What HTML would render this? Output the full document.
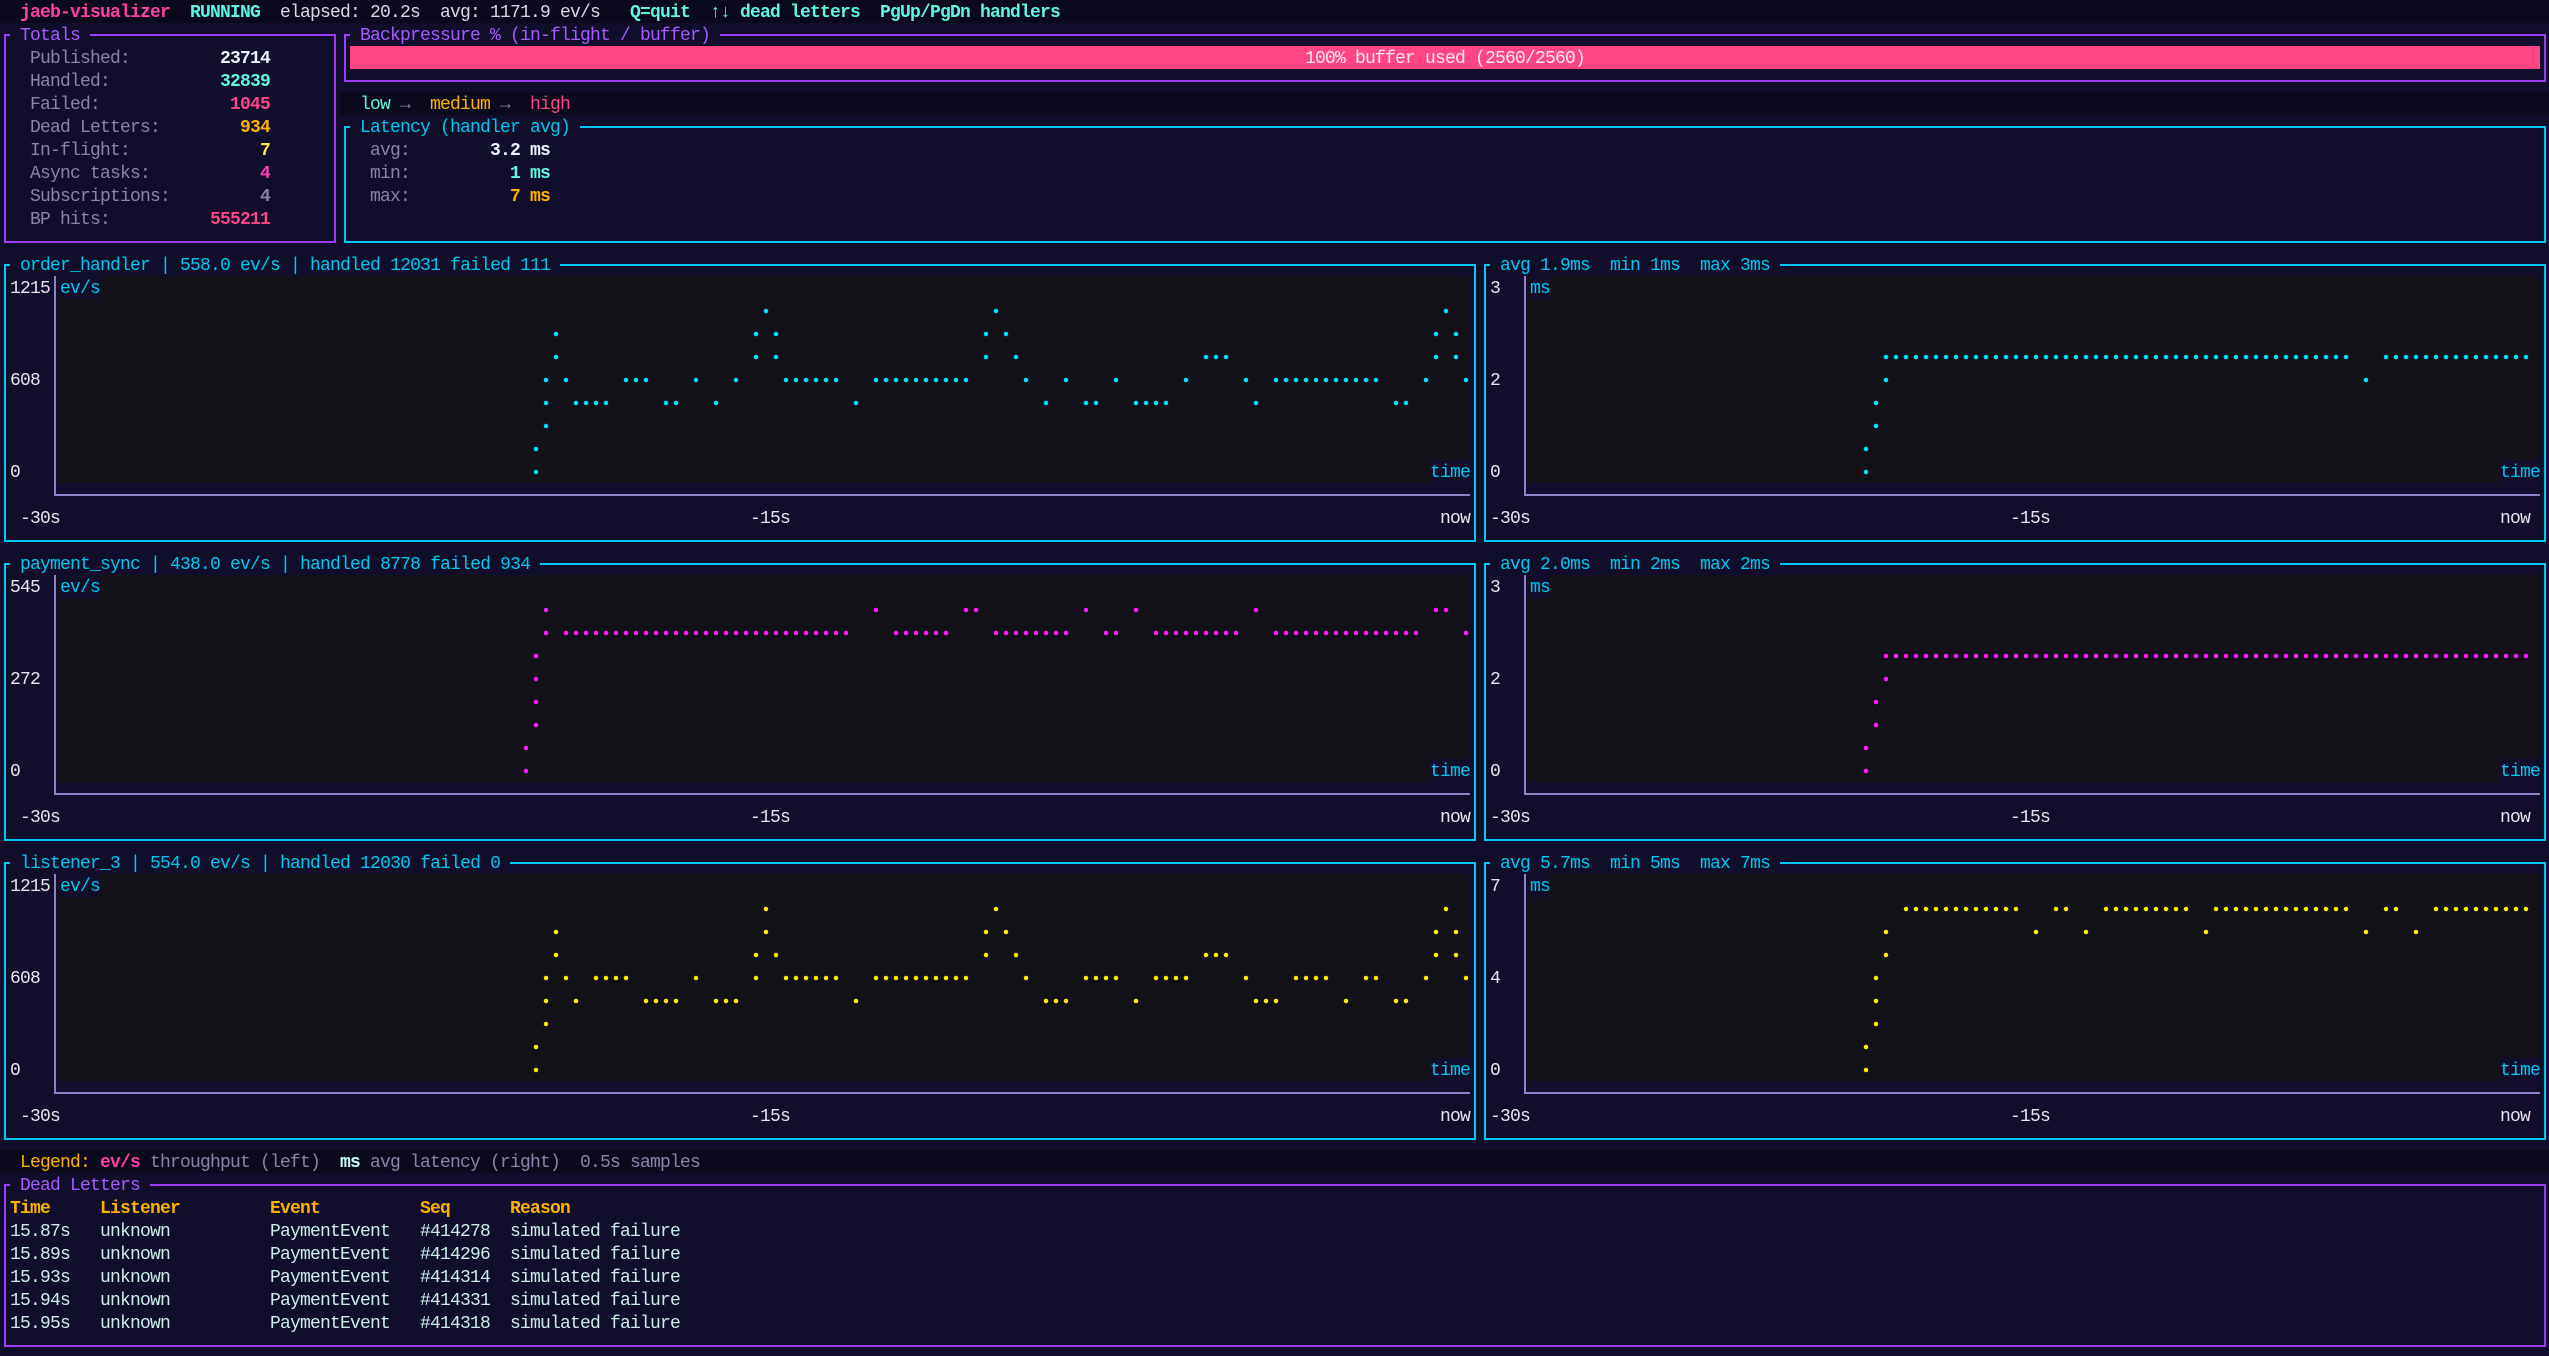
<!DOCTYPE html>
<html><head><meta charset="utf-8"><style>
body{margin:0;width:2549px;height:1356px;background:#110e2b;position:relative;overflow:hidden;font-family:"Liberation Mono","DejaVu Sans Mono",monospace;font-size:18px;letter-spacing:-0.8px;color:#e6e6ee}
.t{position:absolute;white-space:pre;line-height:23px;height:23px;padding-top:2px;box-sizing:border-box;overflow:visible}
.b{position:absolute;border:2px solid;box-sizing:border-box}
.k{font-weight:bold}
.ti{background:#110e2b;padding-left:10px;padding-right:10px}
.r{text-align:right;width:100px}
.lb{color:#8a84a8}
.cy{color:#00c8f0}
.pu{color:#a45cff}
.pl{position:absolute;background:#131219}
.ax{position:absolute;background:#8f82c8}
.dl{color:#cdeee8}
.or{color:#ffb000}
</style></head><body>
<div style="position:absolute;left:0;top:0;width:2549px;height:23px;background:#0b0a1c"></div>
<span class="t k" style="left:20px;top:0;color:#ff3fa4">jaeb-visualizer</span>
<span class="t k" style="left:190px;top:0;color:#5ff5e0">RUNNING</span>
<span class="t" style="left:280px;top:0;color:#d8d8e8">elapsed: 20.2s</span>
<span class="t" style="left:440px;top:0;color:#d8d8e8">avg: 1171.9 ev/s</span>
<span class="t k" style="left:630px;top:0;color:#5ff5e0">Q=quit</span>
<span class="t k" style="left:710px;top:0;color:#5ff5e0">↑↓ dead letters</span>
<span class="t k" style="left:880px;top:0;color:#5ff5e0">PgUp/PgDn handlers</span>

<!-- Totals -->
<div class="b" style="left:4px;top:33.5px;width:332px;height:209px;border-color:#9b3cff"></div>
<span class="t ti pu" style="left:10px;top:23px">Totals</span>
<span class="t lb" style="left:30px;top:46px">Published:</span><span class="t k r" style="left:170px;top:46px;color:#eef4ff">23714</span>
<span class="t lb" style="left:30px;top:69px">Handled:</span><span class="t k r" style="left:170px;top:69px;color:#5ff5e6">32839</span>
<span class="t lb" style="left:30px;top:92px">Failed:</span><span class="t k r" style="left:170px;top:92px;color:#ff4584">1045</span>
<span class="t lb" style="left:30px;top:115px">Dead Letters:</span><span class="t k r" style="left:170px;top:115px;color:#ffb000">934</span>
<span class="t lb" style="left:30px;top:138px">In-flight:</span><span class="t k r" style="left:170px;top:138px;color:#ffe45c">7</span>
<span class="t lb" style="left:30px;top:161px">Async tasks:</span><span class="t k r" style="left:170px;top:161px;color:#ff3fc0">4</span>
<span class="t lb" style="left:30px;top:184px">Subscriptions:</span><span class="t k r" style="left:170px;top:184px;color:#8a84a8">4</span>
<span class="t lb" style="left:30px;top:207px">BP hits:</span><span class="t k r" style="left:170px;top:207px;color:#ff4584">555211</span>

<!-- Backpressure -->
<div class="b" style="left:344px;top:33.5px;width:2202px;height:48px;border-color:#9b3cff"></div>
<span class="t ti pu" style="left:350px;top:23px">Backpressure % (in-flight / buffer)</span>
<div class="t" style="left:350px;top:46px;width:2190px;background:#ff4584;color:#fbeaf2;text-align:center">100% buffer used (2560/2560)</div>
<div style="position:absolute;left:340px;top:92px;width:2209px;height:23px;background:#0b0a1c"></div>
<span class="t" style="left:360px;top:92px;color:#5ff5e0">low</span>
<span class="t lb" style="left:400px;top:92px">→</span>
<span class="t or" style="left:430px;top:92px">medium</span>
<span class="t lb" style="left:500px;top:92px">→</span>
<span class="t" style="left:530px;top:92px;color:#ff4584">high</span>

<!-- Latency -->
<div class="b" style="left:344px;top:125.5px;width:2202px;height:117px;border-color:#00c8f0"></div>
<span class="t ti cy" style="left:350px;top:115px">Latency (handler avg)</span>
<span class="t lb" style="left:370px;top:138px">avg:</span><span class="t k r" style="left:450px;top:138px;color:#eef4ff">3.2 ms</span>
<span class="t lb" style="left:370px;top:161px">min:</span><span class="t k r" style="left:450px;top:161px;color:#5ff5e6">1 ms</span>
<span class="t lb" style="left:370px;top:184px">max:</span><span class="t k r" style="left:450px;top:184px;color:#ffb000">7 ms</span>

<!-- Chart 1 -->
<div class="b" style="left:4px;top:263.5px;width:1472px;height:278px;border-color:#00c8f0"></div>
<div class="b" style="left:1484px;top:263.5px;width:1062px;height:278px;border-color:#00c8f0"></div>
<div class="pl" style="left:57px;top:276px;width:1413px;height:207px"></div>
<div class="pl" style="left:1527px;top:276px;width:1013px;height:207px"></div>
<div class="ax" style="left:54px;top:276px;width:2px;height:219.5px"></div>
<div class="ax" style="left:54px;top:493.5px;width:1416px;height:2px"></div>
<div class="ax" style="left:1524px;top:276px;width:2px;height:219.5px"></div>
<div class="ax" style="left:1524px;top:493.5px;width:1016px;height:2px"></div>
<span class="t ti cy" style="left:10px;top:253px">order_handler | 558.0 ev/s | handled 12031 failed 111</span>
<span class="t ti cy" style="left:1490px;top:253px">avg 1.9ms  min 1ms  max 3ms</span>
<span class="t" style="left:10px;top:276px">1215</span><span class="t" style="left:10px;top:368px">608</span><span class="t" style="left:10px;top:460px">0</span>
<span class="t" style="left:1490px;top:276px">3</span><span class="t" style="left:1490px;top:368px">2</span><span class="t" style="left:1490px;top:460px">0</span>
<span class="t cy" style="left:60px;top:276px;background:#110e2b">ev/s</span><span class="t cy" style="left:1530px;top:276px;background:#110e2b">ms</span>
<span class="t cy" style="left:1430px;top:460px;background:#110e2b">time</span><span class="t cy" style="left:2500px;top:460px;background:#110e2b">time</span>
<span class="t" style="left:20px;top:506px">-30s</span><span class="t" style="left:750px;top:506px">-15s</span><span class="t" style="left:1440px;top:506px">now</span>
<span class="t" style="left:1490px;top:506px">-30s</span><span class="t" style="left:2010px;top:506px">-15s</span><span class="t" style="left:2500px;top:506px">now</span>

<!-- Chart 2 -->
<div class="b" style="left:4px;top:562.5px;width:1472px;height:278px;border-color:#00c8f0"></div>
<div class="b" style="left:1484px;top:562.5px;width:1062px;height:278px;border-color:#00c8f0"></div>
<div class="pl" style="left:57px;top:575px;width:1413px;height:207px"></div>
<div class="pl" style="left:1527px;top:575px;width:1013px;height:207px"></div>
<div class="ax" style="left:54px;top:575px;width:2px;height:219.5px"></div>
<div class="ax" style="left:54px;top:792.5px;width:1416px;height:2px"></div>
<div class="ax" style="left:1524px;top:575px;width:2px;height:219.5px"></div>
<div class="ax" style="left:1524px;top:792.5px;width:1016px;height:2px"></div>
<span class="t ti cy" style="left:10px;top:552px">payment_sync | 438.0 ev/s | handled 8778 failed 934</span>
<span class="t ti cy" style="left:1490px;top:552px">avg 2.0ms  min 2ms  max 2ms</span>
<span class="t" style="left:10px;top:575px">545</span><span class="t" style="left:10px;top:667px">272</span><span class="t" style="left:10px;top:759px">0</span>
<span class="t" style="left:1490px;top:575px">3</span><span class="t" style="left:1490px;top:667px">2</span><span class="t" style="left:1490px;top:759px">0</span>
<span class="t cy" style="left:60px;top:575px;background:#110e2b">ev/s</span><span class="t cy" style="left:1530px;top:575px;background:#110e2b">ms</span>
<span class="t cy" style="left:1430px;top:759px;background:#110e2b">time</span><span class="t cy" style="left:2500px;top:759px;background:#110e2b">time</span>
<span class="t" style="left:20px;top:805px">-30s</span><span class="t" style="left:750px;top:805px">-15s</span><span class="t" style="left:1440px;top:805px">now</span>
<span class="t" style="left:1490px;top:805px">-30s</span><span class="t" style="left:2010px;top:805px">-15s</span><span class="t" style="left:2500px;top:805px">now</span>

<!-- Chart 3 -->
<div class="b" style="left:4px;top:861.5px;width:1472px;height:278px;border-color:#00c8f0"></div>
<div class="b" style="left:1484px;top:861.5px;width:1062px;height:278px;border-color:#00c8f0"></div>
<div class="pl" style="left:57px;top:874px;width:1413px;height:207px"></div>
<div class="pl" style="left:1527px;top:874px;width:1013px;height:207px"></div>
<div class="ax" style="left:54px;top:874px;width:2px;height:219.5px"></div>
<div class="ax" style="left:54px;top:1091.5px;width:1416px;height:2px"></div>
<div class="ax" style="left:1524px;top:874px;width:2px;height:219.5px"></div>
<div class="ax" style="left:1524px;top:1091.5px;width:1016px;height:2px"></div>
<span class="t ti cy" style="left:10px;top:851px">listener_3 | 554.0 ev/s | handled 12030 failed 0</span>
<span class="t ti cy" style="left:1490px;top:851px">avg 5.7ms  min 5ms  max 7ms</span>
<span class="t" style="left:10px;top:874px">1215</span><span class="t" style="left:10px;top:966px">608</span><span class="t" style="left:10px;top:1058px">0</span>
<span class="t" style="left:1490px;top:874px">7</span><span class="t" style="left:1490px;top:966px">4</span><span class="t" style="left:1490px;top:1058px">0</span>
<span class="t cy" style="left:60px;top:874px;background:#110e2b">ev/s</span><span class="t cy" style="left:1530px;top:874px;background:#110e2b">ms</span>
<span class="t cy" style="left:1430px;top:1058px;background:#110e2b">time</span><span class="t cy" style="left:2500px;top:1058px;background:#110e2b">time</span>
<span class="t" style="left:20px;top:1104px">-30s</span><span class="t" style="left:750px;top:1104px">-15s</span><span class="t" style="left:1440px;top:1104px">now</span>
<span class="t" style="left:1490px;top:1104px">-30s</span><span class="t" style="left:2010px;top:1104px">-15s</span><span class="t" style="left:2500px;top:1104px">now</span>

<svg style="position:absolute;left:0;top:0" width="2549" height="1356" fill="none" stroke-linecap="round" stroke-width="4.5" stroke-dasharray="0 10">
<path stroke="#00e5ff" d="M766 311h0.01M996 311h0.01M1446 311h0.01
M556 334h0.01M756 334h0.01M776 334h0.01M986 334h0.01M1006 334h0.01M1436 334h0.01M1456 334h0.01
M556 357h10M756 357h0.01M776 357h0.01M986 357h0.01M1016 357h0.01M1206 357h30M1436 357h0.01M1456 357h0.01
M546 380h0.01M566 380h0.01M626 380h30M696 380h10M736 380h10M786 380h60M876 380h100M1026 380h10M1066 380h10M1116 380h10M1186 380h10M1246 380h0.01M1276 380h110M1426 380h0.01M1466 380h0.01
M546 403h0.01M576 403h40M666 403h20M716 403h10M856 403h10M1046 403h10M1086 403h20M1136 403h40M1256 403h10M1396 403h20
M546 426h0.01M536 449h0.01M536 472h0.01
M1866 472h0.01M1866 449h0.01M1876 426h0.01M1876 403h0.01M1886 380h0.01M2366 380h10M1886 357h470M2386 357h150"/>
<path stroke="#ff1cff" d="M526 771h0.01M526 748h0.01M536 725h0.01M536 702h0.01M536 679h0.01M536 656h0.01
M546 633h0.01M566 633h290M896 633h60M996 633h80M1106 633h20M1156 633h90M1276 633h150M1466 633h0.01
M546 610h10M876 610h10M966 610h20M1086 610h10M1136 610h10M1256 610h10M1436 610h20
M1866 771h0.01M1866 748h0.01M1876 725h0.01M1876 702h0.01M1886 679h0.01M1886 656h650"/>
<path stroke="#ffee00" d="M536 1070h0.01M536 1047h0.01M546 1024h0.01
M546 1001h0.01M576 1001h10M646 1001h40M716 1001h30M856 1001h10M1046 1001h30M1136 1001h10M1256 1001h30M1346 1001h10M1396 1001h20
M546 978h0.01M566 978h0.01M596 978h40M696 978h10M756 978h0.01M786 978h60M876 978h100M1026 978h10M1086 978h40M1156 978h40M1246 978h0.01M1296 978h40M1366 978h20M1426 978h0.01M1466 978h0.01
M556 955h10M756 955h0.01M776 955h0.01M986 955h0.01M1016 955h0.01M1206 955h30M1436 955h0.01M1456 955h0.01
M556 932h0.01M766 932h10M986 932h0.01M1006 932h0.01M1436 932h0.01M1456 932h0.01
M766 909h0.01M996 909h0.01M1446 909h0.01
M1866 1070h0.01M1866 1047h0.01M1876 1024h0.01M1876 1001h0.01M1876 978h0.01M1886 955h0.01
M1886 932h10M2036 932h10M2086 932h10M2206 932h0.01M2366 932h10M2416 932h10
M1906 909h120M2056 909h20M2106 909h90M2216 909h140M2386 909h20M2436 909h100"/>
</svg>

<!-- Legend -->
<div style="position:absolute;left:0;top:1150px;width:2549px;height:23px;background:#0b0a1c"></div>
<span class="t or" style="left:20px;top:1150px">Legend:</span>
<span class="t k" style="left:100px;top:1150px;color:#ff3fa4">ev/s</span>
<span class="t lb" style="left:150px;top:1150px">throughput (left)</span>
<span class="t k" style="left:340px;top:1150px;color:#c8fff4">ms</span>
<span class="t lb" style="left:370px;top:1150px">avg latency (right)</span>
<span class="t lb" style="left:580px;top:1150px">0.5s samples</span>

<!-- Dead letters -->
<div class="b" style="left:4px;top:1183.5px;width:2542px;height:163px;border-color:#9b3cff"></div>
<span class="t ti pu" style="left:10px;top:1173px">Dead Letters</span>
<span class="t k or" style="left:10px;top:1196px">Time</span><span class="t k or" style="left:100px;top:1196px">Listener</span><span class="t k or" style="left:270px;top:1196px">Event</span><span class="t k or" style="left:420px;top:1196px">Seq</span><span class="t k or" style="left:510px;top:1196px">Reason</span>
<span class="t dl" style="left:10px;top:1219px">15.87s</span><span class="t dl" style="left:100px;top:1219px">unknown</span><span class="t dl" style="left:270px;top:1219px">PaymentEvent</span><span class="t dl" style="left:420px;top:1219px">#414278</span><span class="t dl" style="left:510px;top:1219px">simulated failure</span>
<span class="t dl" style="left:10px;top:1242px">15.89s</span><span class="t dl" style="left:100px;top:1242px">unknown</span><span class="t dl" style="left:270px;top:1242px">PaymentEvent</span><span class="t dl" style="left:420px;top:1242px">#414296</span><span class="t dl" style="left:510px;top:1242px">simulated failure</span>
<span class="t dl" style="left:10px;top:1265px">15.93s</span><span class="t dl" style="left:100px;top:1265px">unknown</span><span class="t dl" style="left:270px;top:1265px">PaymentEvent</span><span class="t dl" style="left:420px;top:1265px">#414314</span><span class="t dl" style="left:510px;top:1265px">simulated failure</span>
<span class="t dl" style="left:10px;top:1288px">15.94s</span><span class="t dl" style="left:100px;top:1288px">unknown</span><span class="t dl" style="left:270px;top:1288px">PaymentEvent</span><span class="t dl" style="left:420px;top:1288px">#414331</span><span class="t dl" style="left:510px;top:1288px">simulated failure</span>
<span class="t dl" style="left:10px;top:1311px">15.95s</span><span class="t dl" style="left:100px;top:1311px">unknown</span><span class="t dl" style="left:270px;top:1311px">PaymentEvent</span><span class="t dl" style="left:420px;top:1311px">#414318</span><span class="t dl" style="left:510px;top:1311px">simulated failure</span>
</body></html>
